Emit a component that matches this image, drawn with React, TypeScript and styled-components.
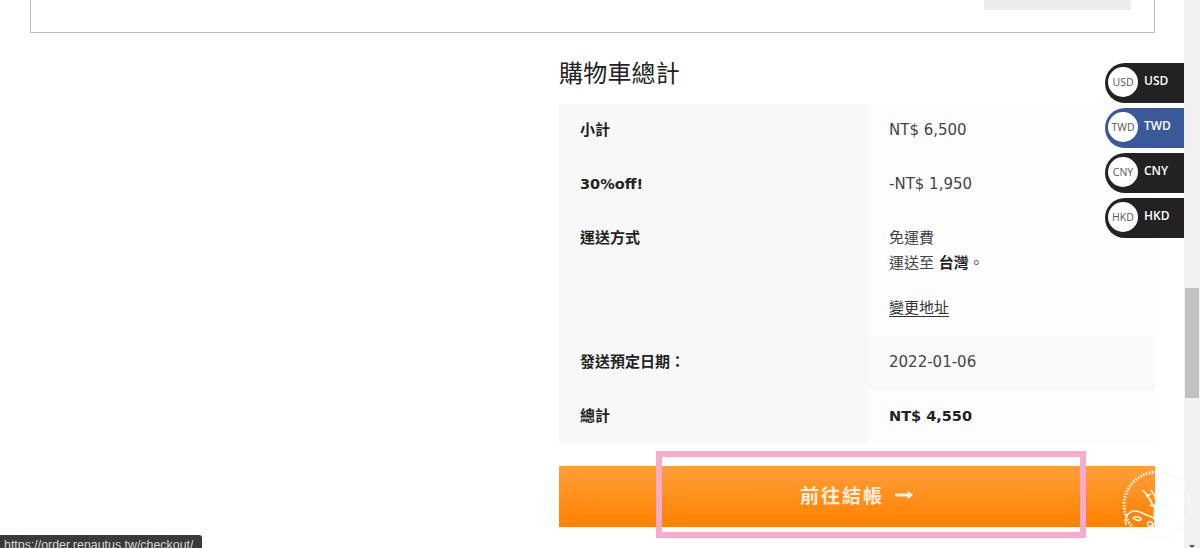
import React from "react";
import styled, { createGlobalStyle } from "styled-components";

const Global = createGlobalStyle`
  html, body { margin: 0; padding: 0; height: 100%; overflow: hidden; background: #fff; }
  body { font-family: "DejaVu Sans", Verdana, "Noto Sans CJK TC", sans-serif; color: #333; }
  #root { height: 100%; }
`;

const Page = styled.div`
  display: flex;
  height: 548px;
  width: 1200px;
  overflow: hidden;
  position: relative;
`;

const Main = styled.main`
  flex: 1;
  min-width: 0;
  padding: 0 29px 0 30px;
`;

const TopCard = styled.section`
  height: 33px;
  box-sizing: border-box;
  border: 1px solid #bdbdbd;
  border-top: 0;
  display: flex;
  justify-content: flex-end;
  align-items: flex-start;
  padding-right: 23px;
`;

const GreyButton = styled.div`
  width: 147px;
  height: 10px;
  background: #ececec;
`;

const Totals = styled.section`
  margin: 22px 0 0 529px;
`;

const Title = styled.h2`
  margin: 0 0 15px;
  font: 400 24px/34px "Noto Sans CJK TC", sans-serif;
  color: #222;
  letter-spacing: 0.2px;
`;

const Table = styled.table`
  width: 596px;
  table-layout: fixed;
  border-collapse: collapse;
`;

const Row = styled.tr``;

const Head = styled.th<{ $latin?: boolean }>`
  width: 309px;
  box-sizing: border-box;
  background: #f8f8f8;
  padding: 14px 20px 15px 21px;
  text-align: left;
  vertical-align: top;
  font: 700 ${(p) => (p.$latin ? "14.5px" : "15px")}/25px "DejaVu Sans", "Noto Sans CJK TC", sans-serif;
  color: #222;
`;

const Cell = styled.td<{ $shaded?: boolean; $strong?: boolean }>`
  box-sizing: border-box;
  background: ${(p) => (p.$shaded ? "#f9f9f9" : "#fdfdfd")};
  padding: 14px 20px 15px 21px;
  vertical-align: top;
  font: ${(p) => (p.$strong ? "700 14.5px" : "400 15px")}/25px "DejaVu Sans", "Noto Sans CJK TC", sans-serif;
  color: ${(p) => (p.$strong ? "#222" : "#444")};
`;

const Strong = styled.strong`
  color: #222;
`;

const Change = styled.a`
  display: block;
  margin-top: 20px;
  color: #333;
  text-decoration: underline;
  text-underline-offset: 3px;
`;

const Checkout = styled.button`
  display: flex;
  align-items: center;
  justify-content: center;
  gap: 10px;
  width: 596px;
  height: 61px;
  margin-top: 22px;
  border: 0;
  padding: 0 0 4px;
  background: linear-gradient(#ff9f3a, #ff8000);
  color: #ffeedd;
  font: 700 19px/1 "Noto Sans CJK TC", sans-serif;
  letter-spacing: 2px;
`;

const Scrollbar = styled.aside`
  width: 16px;
  flex: none;
  background: #f1f1f1;
  padding-top: 288px;
  box-sizing: border-box;
  display: flex;
  flex-direction: column;
  align-items: center;
  position: relative;
`;

const Thumb = styled.div`
  width: 14px;
  height: 110px;
  background: #c1c1c1;
`;

const Arrow = styled.div`
  position: absolute;
  bottom: 0;
  left: 5px;
  width: 0;
  height: 0;
  border-left: 3px solid transparent;
  border-right: 3px solid transparent;
  border-top: 3px solid #505050;
`;

const Switcher = styled.nav`
  position: absolute;
  top: 63px;
  right: 16px;
  display: flex;
  flex-direction: column;
  gap: 5px;
`;

const Pill = styled.div<{ $active?: boolean }>`
  width: 79px;
  height: 40px;
  box-sizing: border-box;
  padding: 0 0 4px 3px;
  border-radius: 20px 0 0 20px;
  background: ${(p) => (p.$active ? "#3b5998" : "#222")};
  display: flex;
  align-items: center;
  gap: 6px;
`;

const Badge = styled.span`
  width: 30px;
  height: 30px;
  margin-top: 2px;
  border-radius: 50%;
  background: #fff;
  color: #555;
  font: 400 10.5px/30px "Open Sans", sans-serif;
  text-align: center;
  flex: none;
`;

const Code = styled.span`
  color: #fff;
  font: 600 12px/1 "Open Sans", sans-serif;
`;

const Annotation = styled.div`
  position: absolute;
  left: 656px;
  top: 451px;
  width: 430px;
  height: 87px;
  box-sizing: border-box;
  border: 6px solid #f8abcb;
  pointer-events: none;
`;

const StatusBubble = styled.div`
  position: absolute;
  left: 0;
  top: 535px;
  width: 202px;
  height: 13px;
  overflow: hidden;
  box-sizing: border-box;
  padding: 4px 0 0 4px;
  background: #3a3a3c;
  border-top-right-radius: 3px;
  color: #d8d8d8;
  font: 400 12.4px/13px "Liberation Sans", Arial, sans-serif;
  white-space: nowrap;
`;

const Seal = styled.svg`
  position: absolute;
  left: 1120px;
  top: 468px;
  width: 76px;
  height: 72px;
  pointer-events: none;
`;

const currencies = ["USD", "TWD", "CNY", "HKD"];

export default function App() {
  return (
    <Page>
      <Global />
      <Main>
        <TopCard>
          <GreyButton />
        </TopCard>
        <Totals>
          <Title>購物車總計</Title>
          <Table>
            <tbody>
              <Row>
                <Head>小計</Head>
                <Cell>NT$ 6,500</Cell>
              </Row>
              <Row>
                <Head $latin>30%off!</Head>
                <Cell>-NT$ 1,950</Cell>
              </Row>
              <Row>
                <Head>運送方式</Head>
                <Cell>
                  免運費
                  <br />
                  運送至 <Strong>台灣</Strong>。
                  <Change>變更地址</Change>
                </Cell>
              </Row>
              <Row>
                <Head>發送預定日期：</Head>
                <Cell $shaded>2022-01-06</Cell>
              </Row>
              <Row>
                <Head>總計</Head>
                <Cell $strong>NT$ 4,550</Cell>
              </Row>
            </tbody>
          </Table>
          <Checkout>
            前往結帳
            <svg width="20" height="12" viewBox="0 0 20 12" aria-hidden="true">
              <path d="M1 6h15" stroke="#fff3e6" strokeWidth="3" fill="none" />
              <path d="M13.5 1.5 19 6l-5.500 4.500z" fill="#fff3e6" />
            </svg>
          </Checkout>
        </Totals>
      </Main>
      <Scrollbar>
        <Thumb />
        <Arrow />
      </Scrollbar>
      <Switcher>
        {currencies.map((c) => (
          <Pill key={c} $active={c === "TWD"}>
            <Badge>{c}</Badge>
            <Code>{c}</Code>
          </Pill>
        ))}
      </Switcher>
      <Annotation />
      <Seal viewBox="0 0 76 72" fill="none" stroke="#fff6ec" aria-hidden="true">
        <circle cx="37" cy="37" r="33" strokeWidth="3" strokeDasharray="1.600 1.400" />
        <path d="M23 22l6 8 5 9 2-4-1-7-4-6M26 28l5-2M30 37l5 2-1 7 1 5" strokeWidth="1.600" />
        <path d="M6 57c-2-7 2-14 9-14 6 0 10 4 14 5 4 1 7 3 6 7-1 5-6 3-7 7-1 3-5 4-8 4M13 50c3-2 8-1 8 1s-5 2-8-1z" strokeWidth="1.600" />
        <circle cx="30" cy="56" r="2.500" strokeWidth="1.400" />
      </Seal>
      <StatusBubble>https://order.renautus.tw/checkout/</StatusBubble>
    </Page>
  );
}
